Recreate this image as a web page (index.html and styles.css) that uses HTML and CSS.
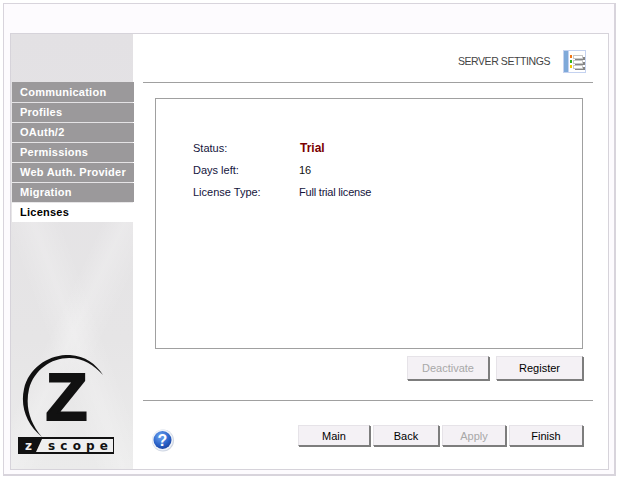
FILE: index.html
```html
<!DOCTYPE html>
<html lang="en">
<head>
<meta charset="utf-8">
<title>Server Settings</title>
<link rel="stylesheet" href="styles.css">
</head>
<body>
<div class="window">
  <div class="panel">
    <aside class="sidebar">
      <nav class="nav">
        <div class="nav-item">Communication</div>
        <div class="nav-item">Profiles</div>
        <div class="nav-item">OAuth/2</div>
        <div class="nav-item">Permissions</div>
        <div class="nav-item">Web Auth. Provider</div>
        <div class="nav-item">Migration</div>
        <div class="nav-item active">Licenses</div>
      </nav>
      <svg class="logo" width="96" height="99" viewBox="0 0 96 99">
        <path d="M24 82 C9 70 2 52 6 34 C11 12 32 -1 52 0 C67 1 78 9 85 20 C76 10 65 3 51 3 C33 3 16 15 11 34 C7 52 12 68 24 82 Z" fill="#111"/>
        <text class="logo-z" x="27.5" y="65" textLength="42" lengthAdjust="spacingAndGlyphs">Z</text>
        <rect x="0" y="82" width="96" height="17" fill="#111"/>
        <polygon points="18,97 24,84 95,84 95,97" fill="#efefef"/>
        <text class="logo-small-z" x="7" y="95">z</text>
        <text class="logo-scope" x="30" y="95" textLength="60">scope</text>
      </svg>
    </aside>
    <main class="main">
      <header class="header">
        <span class="title">SERVER SETTINGS</span>
        <svg class="settings-icon" width="23" height="23" viewBox="0 0 23 23">
          <rect x="0.5" y="0.5" width="22" height="22" fill="#fff" stroke="#c4d2f0"/>
          <rect x="1" y="1" width="4" height="21" fill="#7fa9d9"/>
          <rect x="5" y="1" width="1" height="21" fill="#c4d2f0"/>
          <rect x="7" y="5" width="2" height="3" fill="#f07818"/>
          <rect x="7" y="10" width="2" height="3" fill="#30b020"/>
          <rect x="7" y="15" width="2" height="3" fill="#f4c800"/>
          <rect x="12" y="7" width="10" height="3" fill="#858585"/>
          <rect x="12" y="12" width="10" height="3" fill="#858585"/>
          <rect x="12" y="17" width="10" height="3" fill="#858585"/>
          <rect x="10.5" y="5.5" width="9" height="3" fill="#fff" stroke="#c8c8c8"/>
          <rect x="10.5" y="10.5" width="9" height="3" fill="#fff" stroke="#c8c8c8"/>
          <rect x="10.5" y="15.5" width="9" height="3" fill="#fff" stroke="#c8c8c8"/>
        </svg>
      </header>
      <div class="content">
        <section class="box">
          <dl class="info">
            <div class="info-row"><dt>Status:</dt><dd class="trial">Trial</dd></div>
            <div class="info-row"><dt>Days left:</dt><dd class="days">16</dd></div>
            <div class="info-row"><dt>License Type:</dt><dd class="tight">Full trial license</dd></div>
          </dl>
        </section>
        <div class="actions">
          <button class="btn deactivate" disabled>Deactivate</button>
          <button class="btn register">Register</button>
        </div>
      </div>
      <footer class="footer">
        <svg class="help" width="23" height="23" viewBox="0 0 23 23">
          <defs>
            <radialGradient id="helpFill" cx="0.4" cy="0.3" r="0.8">
              <stop offset="0" stop-color="#6fa6f2"/>
              <stop offset="0.6" stop-color="#2a62c8"/>
              <stop offset="1" stop-color="#173a96"/>
            </radialGradient>
          </defs>
          <circle cx="11" cy="11.5" r="11" fill="#cfd6e2"/>
          <circle cx="10.5" cy="11" r="10.5" fill="#eef2f8"/>
          <circle cx="10.5" cy="11" r="9" fill="url(#helpFill)"/>
          <text class="help-mark" x="10.5" y="17" text-anchor="middle">?</text>
        </svg>
        <div class="nav-buttons">
          <button class="btn main-btn">Main</button>
          <button class="btn back">Back</button>
          <button class="btn apply" disabled>Apply</button>
          <button class="btn finish">Finish</button>
        </div>
      </footer>
    </main>
  </div>
</div>
</body>
</html>
```
FILE: styles.css
```css
* { box-sizing: border-box; }
html, body { margin: 0; padding: 0; background: #fff; }
body { width: 619px; height: 479px; padding: 3px; font-family: "Liberation Sans", Arial, sans-serif; font-size: 11px; }
.window { width: 613px; height: 473px; border: 1px solid #d8d4dc; border-right-width: 2px; border-bottom-width: 2px; background: #fdfbfe; padding: 29px 5px 4px 6px; }
.panel { display: flex; height: 437px; border: 1px solid #d6d3da; background: #fff; }
.sidebar {
  width: 122px; flex: none; display: flex; flex-direction: column; position: relative;
  background:
    linear-gradient(115deg, transparent 55%, rgba(255,255,255,.22) 62%, transparent 72%),
    linear-gradient(70deg, transparent 30%, rgba(255,255,255,.2) 40%, transparent 50%),
    linear-gradient(#e3e1e4, #e6e5e6 70%, #ebebeb);
}
.nav { margin: 48px -1px 0 1px; display: flex; flex-direction: column; }
.nav-item { height: 19px; margin-bottom: 1px; padding-left: 8px; background: #9b999b; color: #fff; font-weight: bold; font-size: 11px; line-height: 19px; letter-spacing: .25px; white-space: nowrap; }
.nav-item:first-child { height: 20px; line-height: 20px; }
.nav-item.active { background: #fff; color: #000; margin: 0; }
.logo { position: absolute; left: 7px; top: 321px; }
.logo-z { font-family: "Liberation Sans", sans-serif; font-weight: bold; font-size: 66px; fill: #111; stroke: #111; stroke-width: 2px; }
.logo-small-z { font-family: "DejaVu Sans", sans-serif; font-weight: bold; font-size: 12px; fill: #efefef; }
.logo-scope { font-family: "DejaVu Sans", sans-serif; font-weight: bold; font-size: 12px; fill: #111; }
.main { flex: 1; display: flex; flex-direction: column; min-width: 0; }
.header { height: 49px; margin: 0 15px 0 10px; padding: 16px 7px 0 0; border-bottom: 1px solid #a0a0a0; display: flex; justify-content: flex-end; align-items: flex-start; box-sizing: border-box; }
.title { font-size: 10.5px; letter-spacing: -.42px; color: #444; margin: 5px 13px 0 0; line-height: 13px; }
.content { padding: 15px 25px 0 22px; }
.box { height: 251px; border: 1px solid #a0a0a0; background: #fff; padding: 43px 0 0 37px; }
.info { margin: 0; display: flex; flex-direction: column; gap: 9px; color: #14143c; }
.info-row { display: flex; height: 13px; line-height: 13px; }
.info dt { width: 106px; }
.info dd { margin: 0; }
.tight { letter-spacing: -.2px; }
.days { color: #111; }
.trial { color: #7a0000; font-weight: bold; font-size: 12px; margin-left: 1px !important; }
.actions { display: flex; justify-content: flex-end; gap: 7px; margin-top: 7px; }
.btn { font: 11px "Liberation Sans", Arial, sans-serif; color: #000; background: #f4f1f5; border: 1px solid; border-color: #e6e3e8 #7d7d7d #7d7d7d #e6e3e8; box-shadow: 1px 1px 0 #7d7d7d; padding: 0; height: 24px; }
.btn:disabled { color: #a8a8a8; }
.deactivate { width: 82px; }
.register { width: 87px; }
.footer { margin: 20px 15px 0 10px; border-top: 1px solid #a0a0a0; padding: 24px 10px 0 9px; display: flex; justify-content: space-between; align-items: flex-start; }
.help { margin-top: 4px; }
.help-mark { font-family: "Liberation Sans", sans-serif; font-weight: bold; font-size: 16px; fill: #fff; }
.nav-buttons { display: flex; gap: 3px; }
.nav-buttons .btn { height: 21px; }
.main-btn { width: 72px; }
.back { width: 66px; }
.apply { width: 64px; }
.finish { width: 74px; }
```
